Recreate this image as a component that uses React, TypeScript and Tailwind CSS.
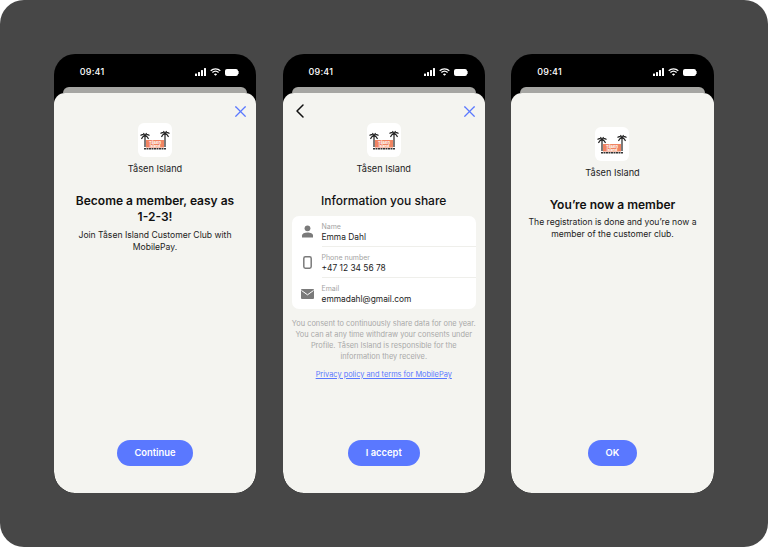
import React from 'react';
import { X, ChevronLeft } from 'lucide-react';

const StatusBar = () => (
  <div className="h-[33px] pl-[26px] pr-[17px] pt-[3px] flex items-center justify-between text-white">
    <span className="text-[9px] font-medium tracking-[0.2px]">09:41</span>
    <div className="flex items-center gap-[3px]">
      <svg width="12" height="8" viewBox="0 0 12 8" fill="#fff">
        <rect x="0" y="5.5" width="2" height="2.5" rx="0.5" />
        <rect x="3" y="4" width="2" height="4" rx="0.5" />
        <rect x="6" y="2" width="2" height="6" rx="0.5" />
        <rect x="9" y="0" width="2" height="8" rx="0.5" />
      </svg>
      <svg width="11" height="8" viewBox="0 0 11 8" fill="none" stroke="#fff" strokeWidth="1.3">
        <path d="M0.7 2.8a7 7 0 0 1 9.6 0" />
        <path d="M2.4 4.5a4.6 4.6 0 0 1 6.2 0" />
        <path d="M5.5 7.8 L3.9 6.2a2.3 2.3 0 0 1 3.2 0Z" fill="#fff" stroke="none" />
      </svg>
      <div className="flex items-center ml-[1px]">
        <div className="w-[13px] h-[7px] rounded-[2px] bg-white" />
        <div className="w-[1px] h-[3px] bg-white/60" />
      </div>
    </div>
  </div>
);

const Palm = ({ x, top }: { x: number; top: number }) => (
  <g stroke="#222" fill="none">
    <path d={`M${x} 24 L${x} ${top}`} strokeWidth="1.2" />
    <g strokeWidth="1.1">
      <path d={`M${x} ${top} Q${x - 2} ${top - 2.5} ${x - 4.5} ${top - 0.5}`} />
      <path d={`M${x} ${top} Q${x + 2} ${top - 2.5} ${x + 4.5} ${top - 0.5}`} />
      <path d={`M${x} ${top} Q${x - 2.5} ${top} ${x - 3.5} ${top + 3}`} />
      <path d={`M${x} ${top} Q${x + 2.5} ${top} ${x + 3.5} ${top + 3}`} />
      <path d={`M${x} ${top} L${x - 1.5} ${top - 3}`} />
      <path d={`M${x} ${top} L${x + 1.5} ${top - 3}`} />
    </g>
  </g>
);

const Logo = () => (
  <div className="w-[34px] h-[34px] rounded-[6px] bg-white overflow-hidden">
    <svg width="34" height="34" viewBox="0 0 34 34">
      <rect x="8" y="17" width="18" height="7.5" fill="#f08462" />
      <text x="17" y="21" textAnchor="middle" fontSize="4" fontWeight="700" fill="#fff">Tåsen</text>
      <text x="17" y="24.3" textAnchor="middle" fontSize="3.6" fontWeight="700" fill="#fff">Island</text>
      <Palm x={7} top={13} />
      <Palm x={27} top={11} />
      <path d="M6 25.8H28" stroke="#333" strokeWidth="1.4" strokeDasharray="2 0.5" />
    </svg>
  </div>
);

const Brand = () => (
  <div className="flex flex-col items-center gap-[6px]">
    <Logo />
    <span className="text-[9.2px] leading-[12px] text-[#222]">Tåsen Island</span>
  </div>
);

const Btn = ({ label, w }: { label: string; w: string }) => (
  <div className={`mt-auto mb-[27px] self-center h-[26px] rounded-full bg-[#5a78ff] text-white text-[9.4px] font-semibold flex items-center justify-center ${w}`}>
    {label}
  </div>
);

const Phone = ({ children }: { children: React.ReactNode }) => (
  <div className="w-[202.5px] h-[439px] rounded-[21px] bg-black overflow-hidden flex flex-col">
    <StatusBar />
    <div className="mx-[9px] h-[6px] rounded-t-[6px] bg-[#a6a6a3] shrink-0" />
    <div className="flex-1 bg-[#f4f4f0] rounded-t-[11px] rounded-b-[21px] flex flex-col relative">
      {children}
    </div>
  </div>
);

const CloseBtn = () => (
  <X className="absolute top-[9px] right-[6px] w-[19px] h-[19px] text-[#5a78ff]" strokeWidth={1.5} />
);

const UserIcon = () => (
  <svg width="13" height="13" viewBox="0 0 13 13" fill="#7a7a7a">
    <circle cx="6.5" cy="3.3" r="2.9" />
    <path d="M1 12.6V10.6C1 8.7 3.5 7.6 6.5 7.6S12 8.7 12 10.6V12.6Z" />
  </svg>
);

const PhoneIcon = () => (
  <svg width="9" height="13" viewBox="0 0 9 13" fill="none" stroke="#7a7a7a" strokeWidth="1.5">
    <rect x="0.8" y="0.8" width="7.4" height="11.4" rx="1.6" />
  </svg>
);

const MailIcon = () => (
  <svg width="13" height="10" viewBox="0 0 13 10">
    <rect x="0" y="0" width="13" height="10" rx="1" fill="#7a7a7a" />
    <path d="M0.5 1.5L6.5 5.8L12.5 1.5" fill="none" stroke="#fff" strokeWidth="1" />
  </svg>
);

const Row = ({ icon, label, value, line }: { icon: React.ReactNode; label: string; value: string; line?: boolean }) => (
  <div className="flex h-[31px]">
    <div className="w-[30px] flex items-center justify-center pl-[1px]">{icon}</div>
    <div className={`flex-1 flex flex-col justify-center pt-[2px] ${line ? 'border-b border-[#efefeb]' : ''}`}>
      <span className="text-[7px] leading-[9px] text-[#a3a3a3]">{label}</span>
      <span className="text-[8.4px] leading-[12px] text-[#1c1c1c]">{value}</span>
    </div>
  </div>
);

const App: React.FC = () => {
  return (
    <div className="w-[768px] h-[547px] bg-white" style={{ fontFamily: 'Inter, sans-serif' }}>
      <div className="w-full h-full rounded-[24px] bg-[#474747] pt-[54px] pl-[53.75px] flex gap-[26.25px]">
        <Phone>
          <CloseBtn />
          <div className="pt-[30px] self-center"><Brand /></div>
          <div className="mt-[18px] px-[16px] text-center text-[12px] leading-[16px] font-semibold text-[#111]">
            Become a member, easy as 1-2-3!
          </div>
          <div className="mt-[4px] px-[20px] text-center text-[8.6px] leading-[12px] text-[#222]">
            Join Tåsen Island Customer Club with MobilePay.
          </div>
          <Btn label="Continue" w="w-[76px]" />
        </Phone>

        <Phone>
          <ChevronLeft className="absolute top-[6px] left-[5px] w-[24px] h-[24px] text-[#111]" strokeWidth={1.5} />
          <CloseBtn />
          <div className="pt-[30px] self-center"><Brand /></div>
          <div className="mt-[18px] text-center text-[12px] leading-[16px] font-medium text-[#111]">
            Information you share
          </div>
          <div className="mt-[7px] mx-[9px] bg-white rounded-[7px]">
            <Row icon={<UserIcon />} label="Name" value="Emma Dahl" line />
            <Row icon={<PhoneIcon />} label="Phone number" value="+47 12 34 56 78" line />
            <Row icon={<MailIcon />} label="Email" value="emmadahl@gmail.com" />
          </div>
          <div className="mt-[9px] px-[8px] text-center text-[7.4px] leading-[11px] text-[#a8a8a8]">
            You consent to continuously share data for one year. You can at any time withdraw your consents under Profile. Tåsen Island is responsible for the information they receive.
          </div>
          <div className="mt-[7px] text-center text-[7.4px] leading-[11px] text-[#5a78ff] underline">
            Privacy policy and terms for MobilePay
          </div>
          <Btn label="I accept" w="w-[72px]" />
        </Phone>

        <Phone>
          <div className="pt-[34px] self-center"><Brand /></div>
          <div className="mt-[18px] text-center text-[12px] leading-[16px] font-semibold text-[#111]">
            You’re now a member
          </div>
          <div className="mt-[3px] px-[14px] text-center text-[8.6px] leading-[12px] text-[#222]">
            The registration is done and you’re now a member of the customer club.
          </div>
          <Btn label="OK" w="w-[49px]" />
        </Phone>
      </div>
    </div>
  );
};

export default App;
